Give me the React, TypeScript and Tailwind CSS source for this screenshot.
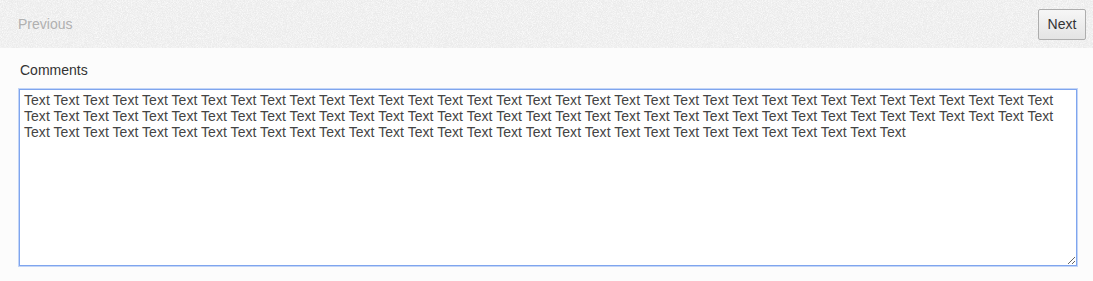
import { useEffect, useRef } from 'react'

const text = Array.from({ length: 100 }, () => 'Text').join(' ')

export default function App() {
  const ref = useRef<HTMLTextAreaElement>(null)

  useEffect(() => {
    const el = ref.current
    if (el) {
      el.focus()
      el.setSelectionRange(el.value.length, el.value.length)
    }
  }, [])

  return (
    <div className="min-h-screen bg-[#fcfcfc] font-['Liberation_Sans',Arial,sans-serif]">
      {/* Header */}
      <div className="relative h-12 bg-[#ebebeb] flex items-center justify-between pl-[18px] pr-[7px] overflow-hidden">
        <svg className="absolute inset-0 w-full h-full" aria-hidden="true">
          <filter id="noise">
            <feTurbulence type="fractalNoise" baseFrequency="1.2" numOctaves="2" stitchTiles="stitch" />
            <feColorMatrix type="matrix" values="0 0 0 0 1  0 0 0 0 1  0 0 0 0 1  0 0 0 1.6 -0.55" />
          </filter>
          <rect width="100%" height="100%" filter="url(#noise)" />
        </svg>
        <span className="relative text-[14px] text-[#b0b0b0]">Previous</span>
        <button className="relative h-[31px] w-[48px] rounded-[2px] border border-[#adadad] bg-gradient-to-b from-[#f6f6f6] to-[#e4e4e4] text-[14px] text-[#333]">
          Next
        </button>
      </div>

      {/* Comments */}
      <div className="px-[19px] pt-[14px]">
        <label className="block text-[14px] leading-4 text-[#333] mb-[11px] pl-px">Comments</label>
        <textarea
          ref={ref}
          defaultValue={text}
          className="block w-[1058px] h-[177px] border border-[#7fa5ee] outline outline-1 outline-[#c3d5f7] px-[4px] py-[2px] text-[14px] leading-4 tracking-[0.04px] text-[#444] bg-white caret-[#222] font-['Liberation_Sans',Arial,sans-serif]"
        />
      </div>
    </div>
  )
}
